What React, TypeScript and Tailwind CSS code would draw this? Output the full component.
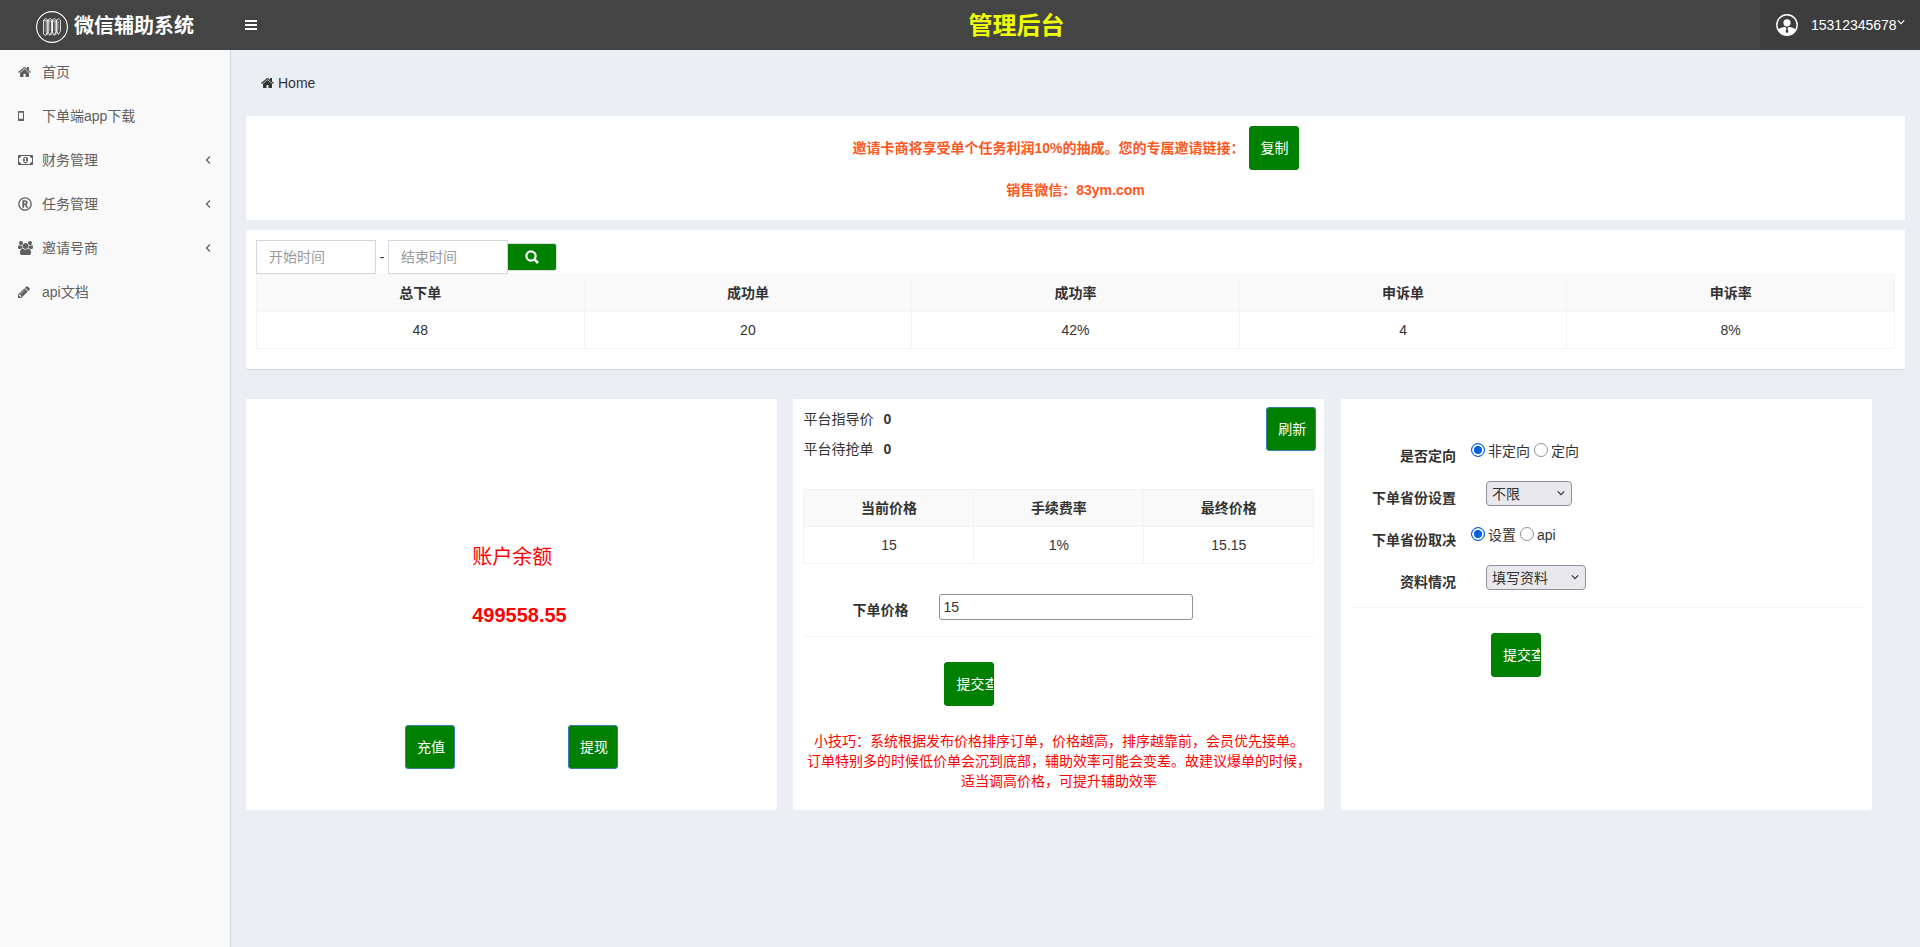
import { type ReactNode } from "react";
import { FaRegRegistered } from "react-icons/fa";

type IconProps = { className?: string };

function Glyph({ d, box, className }: IconProps & { d: string; box: string }) {
  return (
    <svg viewBox={box} className={className} fill="currentColor" aria-hidden="true">
      <path d={d} />
    </svg>
  );
}

function HomeIcon({ className }: IconProps) {
  return (
    <Glyph
      className={className}
      box="0 0 1664 1792"
      d="M1408 992v480q0 26-19 45t-45 19h-384v-384H704v384H320q-26 0-45-19t-19-45V992q0-1 .5-3t.5-3l575-474 575 474q1 2 1 6zm223-69l-62 74q-8 9-21 11h-3q-13 0-21-7L832 424l-692 577q-12 8-24 7-13-2-21-11l-62-74q-8-10-7-23.500t11-21.500l719-599q32-26 76-26t76 26l244 204V288q0-14 9-23t23-9h192q14 0 23 9t9 23v408l219 182q10 8 11 21.500t-7 23.500z"
    />
  );
}

function MobileIcon({ className }: IconProps) {
  return (
    <svg viewBox="0 0 6 10" className={className} fill="none" stroke="currentColor" aria-hidden="true">
      <rect x="0.5" y="0.5" width="5" height="9" />
      <path d="M0 1h6M0 8.500h6" strokeWidth="1.6" />
    </svg>
  );
}

function MoneyIcon({ className }: IconProps) {
  return (
    <Glyph
      className={className}
      box="0 0 1920 1792"
      d="M768 1152h384v-96h-128V608H910L762 745l77 80q42-37 55-57h2v288H768v96zm512-256q0 70-21 142t-59.500 134-101.500 101-138 39-138-39-101.500-101-59.500-134-21-142 21-142 59.500-134T822 519t138-39 138 39 101.500 101 59.500 134 21 142zm512 256V640q-106 0-181-75t-75-181H384q0 106-75 181t-181 75v512q106 0 181 75t75 181h1152q0-106 75-181t181-75zm128-832v1152q0 26-19 45t-45 19H64q-26 0-45-19t-19-45V320q0-26 19-45t45-19h1792q26 0 45 19t19 45z"
    />
  );
}

function GroupIcon({ className }: IconProps) {
  return (
    <Glyph
      className={className}
      box="0 0 1920 1792"
      d="M593 896q-162 5-265 128H194q-82 0-138-40.500T0 865q0-353 124-353 6 0 43.500 21t97.500 42.500T384 597q67 0 133-23-5 37-5 66 0 139 81 256zm1071 637q0 120-73 189.500t-194 69.500H523q-121 0-194-69.500T256 1533q0-53 3.500-103.500t14-109T300 1212t43-97.500 62-81 85.500-53.500T602 960q10 0 43 21.500t73 48 107 48 135 21.500 135-21.500 107-48 73-48 43-21.500q61 0 111.500 20t85.500 53.500 62 81 43 97.500 26.500 108.500 14 109 3.500 103.500zM640 256q0 106-75 181t-181 75-181-75-75-181 75-181T384 0t181 75 75 181zm704 384q0 159-112.500 271.500T960 1024 688.500 911.500 576 640t112.500-271.500T960 256t271.500 112.500T1344 640zm576 225q0 78-56 118.500t-138 40.500h-134q-103-123-265-128 81-117 81-256 0-29-5-66 66 23 133 23 59 0 119-21.500t97.500-42.500 43.500-21q124 0 124 353zm-128-609q0 106-75 181t-181 75-181-75-75-181 75-181 181-75 181 75 75 181z"
    />
  );
}

function PencilIcon({ className }: IconProps) {
  return (
    <Glyph
      className={className}
      box="128 128 1536 1536"
      d="M491 1536l91-91-235-235-91 91v107h128v128h107zm523-928q0-22-22-22-10 0-17 7l-542 542q-7 7-7 17 0 22 22 22 10 0 17-7l542-542q7-7 7-17zm-54-192l416 416-832 832H128v-416zm683 96q0 53-37 90l-166 166-416-416 166-165q36-38 90-38 53 0 91 38l235 234q37 39 37 91z"
    />
  );
}

function AngleIcon({ className }: IconProps) {
  return (
    <svg viewBox="0 0 6 10" className={className} fill="none" stroke="currentColor" strokeWidth="1.3" aria-hidden="true">
      <path d="M5 1.500 1.500 5 5 8.500" />
    </svg>
  );
}

function DownIcon({ className }: IconProps) {
  return (
    <svg viewBox="0 0 10 6" className={className} fill="none" stroke="currentColor" strokeWidth="1.5" aria-hidden="true">
      <path d="M1 1 5 5 9 1" />
    </svg>
  );
}

function SearchIcon({ className }: IconProps) {
  return (
    <svg viewBox="0 0 14 14" className={className} fill="none" stroke="currentColor" strokeWidth="2.2" aria-hidden="true">
      <circle cx="6" cy="6" r="4.6" />
      <path d="M9.200 9.200 13 13" strokeWidth="2.6" />
    </svg>
  );
}

function Logo() {
  return (
    <svg viewBox="0 0 32 32" className="size-8 shrink-0" fill="none" stroke="#fff" aria-hidden="true">
      <circle cx="16" cy="16" r="15.4" strokeWidth="1.1" />
      <g strokeWidth="0.8">
        <path d="M7.500 9.200 9.500 7.500 11.800 9 14 7.500 16.200 9 18.400 7.500 20.600 9 22.800 7.500 24.500 9.200" />
        <path d="M7.500 9.200V23l2.300 1.500 1.200-3.500V10zM11 10l1-1v12l-1 3M12 10v11l1.800 3.500L15.500 21V10zM15.500 10l1-1v12l-1.500 3M16.500 10v11l1.600 3.500 1.700-3.500V10zM19.800 10l1-1v11l-1.300 4M20.800 10v10l1.500 3.500 2.200-3.500V9.200" />
      </g>
      <path d="M9.200 10v11M13.800 10v10M18.200 10v10M22.600 10v9" strokeWidth="0.5" strokeOpacity="0.7" />
    </svg>
  );
}

function Avatar() {
  return (
    <svg viewBox="0 0 22 22" className="size-[22px] shrink-0" aria-hidden="true">
      <circle cx="11" cy="11" r="10.2" fill="none" stroke="#fff" strokeWidth="1.4" />
      <circle cx="11" cy="8.8" r="3.6" fill="#fff" />
      <path d="M2 15.500c2-1.800 4.600-2.500 6.800-2.600L11 14l2.200-1.100c2.200.1 4.800.8 6.800 2.600A10.200 10.200 0 0 1 11 21.200 10.200 10.200 0 0 1 2 15.500z" fill="#fff" />
      <path d="M10 13.500h2l-.4 1.500.9 2.600L11 19.200l-1.500-1.600.9-2.600z" fill="#3d3d3d" />
    </svg>
  );
}

const menu: { label: string; icon: ReactNode; nested?: boolean }[] = [
  { label: "首页", icon: <HomeIcon className="h-3.5 w-[13px]" /> },
  { label: "下单端app下载", icon: <MobileIcon className="h-2.5 w-1.5" /> },
  { label: "财务管理", icon: <MoneyIcon className="h-3.5 w-[15px]" />, nested: true },
  { label: "任务管理", icon: <FaRegRegistered className="size-3.5" />, nested: true },
  { label: "邀请号商", icon: <GroupIcon className="h-3.5 w-[15px]" />, nested: true },
  { label: "api文档", icon: <PencilIcon className="size-3" /> },
];

function SquareButton({ children, outlined = false }: { children: ReactNode; outlined?: boolean }) {
  return (
    <button
      type="button"
      className={
        outlined
          ? "h-11 w-[50px] shrink-0 overflow-hidden rounded-[3px] border border-[#367fa9] bg-[#008000] pl-[11px] text-left whitespace-nowrap text-white"
          : "h-11 w-[50px] shrink-0 overflow-hidden rounded-[3px] border border-[#008000] bg-[#008000] pl-[11px] text-left whitespace-nowrap text-white"
      }
    >
      {children}
    </button>
  );
}

function DataTable({ head, row }: { head: string[]; row: string[] }) {
  return (
    <table className="w-full table-fixed border-collapse text-center">
      <thead>
        <tr className="h-[37px] bg-[#f9f9f9]">
          {head.map((cell) => (
            <th key={cell} className="border border-[#f4f4f4]">{cell}</th>
          ))}
        </tr>
      </thead>
      <tbody>
        <tr className="h-[37px]">
          {row.map((cell) => (
            <td key={cell} className="border border-[#f4f4f4]">{cell}</td>
          ))}
        </tr>
      </tbody>
    </table>
  );
}

function Radio({ name, label, checked = false }: { name: string; label: string; checked?: boolean }) {
  return (
    <label className="flex items-center gap-[3px]">
      <input
        type="radio"
        name={name}
        defaultChecked={checked}
        className="mb-[2px] size-3.5 appearance-none rounded-full border border-[#8f8f9d] bg-white checked:border-[#0060df] checked:bg-[#0060df] checked:shadow-[inset_0_0_0_2px_#fff]"
      />
      {label}
    </label>
  );
}

function Field({ id, label, children }: { id?: string; label: string; children: ReactNode }) {
  return (
    <div className="flex h-[42px]">
      <div className="w-[105px] pt-[11px] text-right font-bold">
        {id ? <label htmlFor={id}>{label}</label> : label}
      </div>
      {children}
    </div>
  );
}

function Picker({ id, option, wide = false }: { id: string; option: string; wide?: boolean }) {
  return (
    <div className="relative ml-[30px] h-[25px]">
      <select
        id={id}
        className={
          wide
            ? "h-[25px] w-[100px] appearance-none rounded-[4px] border border-[#8f8f9d] bg-[#e9e9ed] pl-[5px]"
            : "h-[25px] w-[86px] appearance-none rounded-[4px] border border-[#8f8f9d] bg-[#e9e9ed] pl-[5px]"
        }
      >
        <option>{option}</option>
      </select>
      <DownIcon className="pointer-events-none absolute top-[9px] right-[7px] h-[6px] w-2" />
    </div>
  );
}

export default function App() {
  return (
    <div className="flex min-h-screen flex-col bg-[#ebeef3] font-['Liberation_Sans','Noto_Sans_CJK_SC',sans-serif] text-sm leading-5 text-[#333]">
      <header className="flex h-[50px] items-center bg-[#444] text-white">
        <a href="#" className="flex w-[230px] items-center gap-1.5 pt-1 pl-9 text-xl font-bold">
          <Logo />
          <span className="pb-[2px]">微信辅助系统</span>
        </a>
        <button type="button" aria-label="菜单" className="ml-[15px] flex w-3 flex-col gap-[2px]">
          <span className="h-[2px] bg-white" />
          <span className="h-[2px] bg-white" />
          <span className="h-[2px] bg-white" />
        </button>
        <h1 className="flex-1 pt-[2px] pl-4 text-center text-2xl font-bold text-[#eeff00]">管理后台</h1>
        <button type="button" className="flex h-full w-40 items-center bg-[#3d3d3d] pl-4">
          <Avatar />
          <span className="ml-[13px]">15312345678</span>
          <DownIcon className="mb-1.5 h-[6px] w-2" />
        </button>
      </header>

      <div className="flex flex-1">
        <nav className="w-[231px] shrink-0 border-r border-[#d2d6de] bg-[#f9f9f9] text-[#606060]">
          {menu.map((item) => (
            <a key={item.label} href="#" className="flex h-11 items-center pr-[19px] pl-[18px]">
              <span className="w-6">{item.icon}</span>
              <span className="flex-1">{item.label}</span>
              {item.nested && <AngleIcon className="h-2.5 w-1.5" />}
            </a>
          ))}
        </nav>

        <main className="flex min-w-0 flex-1 flex-col px-[15px]">
          <a href="#" className="flex h-[66px] items-center gap-1 pl-[15px]">
            <HomeIcon className="h-3.5 w-[13px]" />
            Home
          </a>

          <section className="h-[104px] bg-white pt-2.5 text-center font-bold text-[#ff5722]">
            <div className="flex items-center justify-center gap-1">
              <span>邀请卡商将享受单个任务利润10%的抽成。您的专属邀请链接：</span>
              <span className="font-normal"><SquareButton>复制</SquareButton></span>
            </div>
            <p className="mt-2.5">销售微信：83ym.com</p>
          </section>

          <section className="mt-2.5 rounded-b-[3px] bg-white px-2.5 pt-2.5 pb-5 shadow-[0_1px_1px_rgba(0,0,0,0.1)]">
            <div className="flex items-center">
              <input aria-label="开始时间" placeholder="开始时间" className="h-[34px] w-[120px] border border-[#d2d6de] px-3 placeholder:text-[#999]" />
              <span className="w-3 text-center">-</span>
              <input aria-label="结束时间" placeholder="结束时间" className="h-[34px] w-[120px] border border-[#d2d6de] px-3 placeholder:text-[#999]" />
              <button type="button" aria-label="搜索" className="flex h-7 w-[49px] items-center justify-center rounded-r-[3px] border border-l-0 border-[#ddd] bg-[#008000] text-white">
                <SearchIcon className="size-3.5" />
              </button>
            </div>
            <DataTable head={["总下单", "成功单", "成功率", "申诉单", "申诉率"]} row={["48", "20", "42%", "4", "8%"]} />
          </section>

          <div className="mt-5 flex-1 rounded-t-[3px] pt-2.5 shadow-[0_1px_1px_rgba(0,0,0,0.1)]">
            <div className="flex gap-[1%]">
              <section className="flex h-[411px] w-[32%] flex-col items-center rounded-b-[3px] bg-white pt-36 text-xl text-[#f00]">
                <div className="pl-4">
                  <p>账户余额</p>
                  <p className="mt-[30px] font-bold">499558.55</p>
                </div>
                <div className="mt-24 flex gap-[113px] text-sm">
                  <SquareButton outlined>充值</SquareButton>
                  <SquareButton outlined>提现</SquareButton>
                </div>
              </section>

              <section className="h-[411px] w-[32%] rounded-b-[3px] bg-white px-2.5">
                <div className="flex justify-between pt-2">
                  <div className="flex flex-col gap-2.5 pt-[2px]">
                    <p>平台指导价<b className="ml-2.5">0</b></p>
                    <p>平台待抢单<b className="ml-2.5">0</b></p>
                  </div>
                  <div className="-mr-[2px]"><SquareButton outlined>刷新</SquareButton></div>
                </div>
                <div className="mt-[30px]">
                  <DataTable head={["当前价格", "手续费率", "最终价格"]} row={["15", "1%", "15.15"]} />
                </div>
                <div className="mt-[30px] flex h-[43px] border-b border-[#f4f4f4]">
                  <label htmlFor="price" className="w-[105px] pt-1.5 text-right font-bold">下单价格</label>
                  <input id="price" defaultValue="15" className="ml-[31px] h-[26px] w-[254px] rounded-[3px] border border-[#8f8f9d] px-[3px]" />
                </div>
                <div className="mt-[25px] pl-[141px]"><SquareButton>提交查询</SquareButton></div>
                <p className="mt-[25px] text-center text-[#f00]">
                  小技巧：系统根据发布价格排序订单，价格越高，排序越靠前，会员优先接单。
                  <br />
                  订单特别多的时候低价单会沉到底部，辅助效率可能会变差。故建议爆单的时候，
                  <br />
                  适当调高价格，可提升辅助效率
                </p>
              </section>

              <section className="h-[411px] w-[32%] rounded-b-[3px] bg-white px-2.5 pt-9">
                <Field label="是否定向">
                  <div className="ml-[15px] flex h-8 items-center gap-1">
                    <Radio name="direct" label="非定向" checked />
                    <Radio name="direct" label="定向" />
                  </div>
                </Field>
                <Field id="province" label="下单省份设置">
                  <div className="pt-1"><Picker id="province" option="不限" /></div>
                </Field>
                <Field label="下单省份取决">
                  <div className="ml-[15px] flex h-8 items-center gap-1">
                    <Radio name="source" label="设置" checked />
                    <Radio name="source" label="api" />
                  </div>
                </Field>
                <Field id="material" label="资料情况">
                  <div className="pt-1"><Picker id="material" option="填写资料" wide /></div>
                </Field>
                <hr className="mt-1 border-[#f4f4f4]" />
                <div className="mt-[25px] pl-[140px]"><SquareButton>提交查询</SquareButton></div>
              </section>
            </div>
          </div>
        </main>
      </div>
    </div>
  );
}
